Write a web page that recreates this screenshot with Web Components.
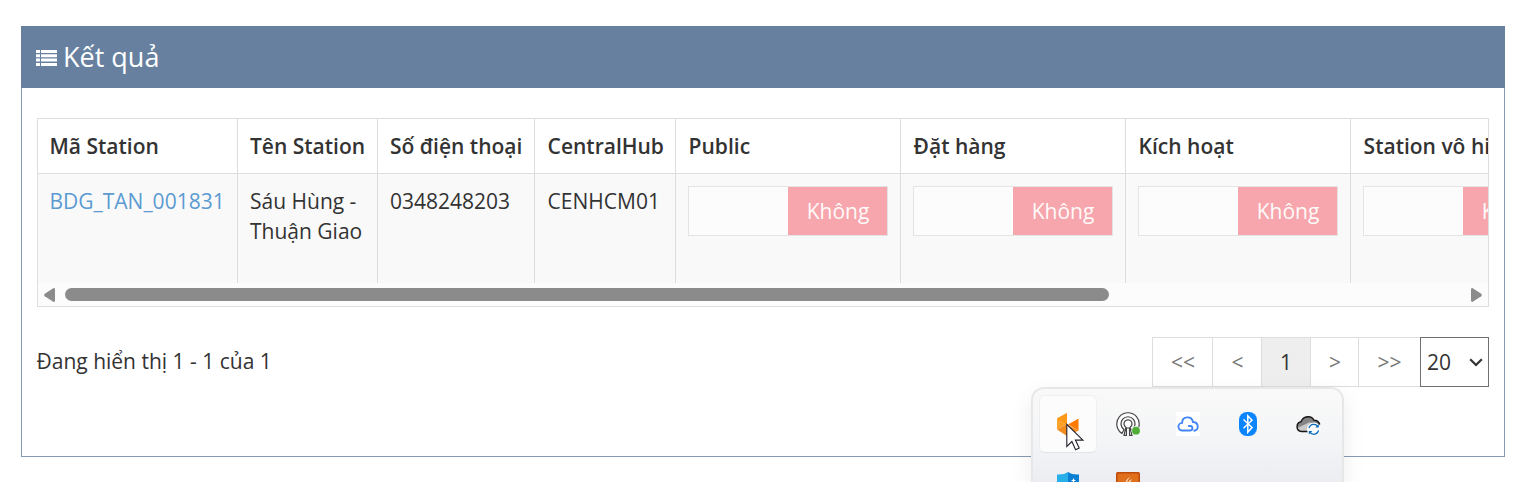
<!DOCTYPE html>
<html lang="vi">
<head>
<meta charset="utf-8">
<title>Kết quả</title>
<style>
    body {
        margin: 0;
        height: 482px;
        overflow: hidden;
        position: relative;
        background: #fff;
        color: #333;
        font: 21px/30px "Open Sans", sans-serif;
    }
    result-panel { margin: 26px 27px 0 21px; }
    tray-flyout { position: absolute; left: 1031px; top: 387px; }
    mouse-pointer { position: absolute; left: 1066px; top: 423px; }
</style>
</head>
<body>
<result-panel heading="Kết quả">
    <station-table></station-table>
    <table-footer>
        <span>Đang hiển thị 1 - 1 của 1</span>
        <page-nav slot="nav" page="1" size="20"></page-nav>
    </table-footer>
</result-panel>
<tray-flyout></tray-flyout>
<mouse-pointer></mouse-pointer>

<script>
class ResultPanel extends HTMLElement {
    constructor() {
        super();
        this.attachShadow({ mode: 'open' });
    }

    connectedCallback() {
        this.shadowRoot.innerHTML = `
            <style>
                :host {
                    display: block;
                    box-sizing: border-box;
                    height: 431px;
                    border: 1px solid #869ab3;
                    border-top: 0;
                }
                header {
                    display: flex;
                    align-items: center;
                    gap: 6px;
                    height: 62px;
                    margin-left: -1px;
                    margin-right: -1px;
                    padding-left: 15px;
                    box-sizing: border-box;
                    background: #67809f;
                    color: #fff;
                    font-size: 27px;
                }
                svg { display: block; margin-top: 2px; }
                .body { padding: 30px 15px 0; }
            </style>
            <header>
                <svg width="21" height="16" viewBox="0 0 21 16" fill="#fff">
                    <path d="M0 0h4v3H0zM5 0h16v3H5zM0 4.3h4v3H0zM5 4.3h16v3H5zM0 8.6h4v3H0zM5 8.6h16v3H5zM0 13h4v3H0zM5 13h16v3H5z"/>
                </svg>
                <span>${this.getAttribute('heading')}</span>
            </header>
            <div class="body"><slot></slot></div>
        `;
    }
}

class YesNoSwitch extends HTMLElement {
    constructor() {
        super();
        this.attachShadow({ mode: 'open' });
    }

    connectedCallback() {
        this.shadowRoot.innerHTML = `
            <style>
                :host {
                    display: flex;
                    box-sizing: border-box;
                    width: 200px;
                    height: 50px;
                    border: 1px solid #e4e4e4;
                    background: #fcfcfc;
                }
                i { flex: 1; }
                span {
                    width: 99px;
                    box-sizing: border-box;
                    padding-left: 1px;
                    background: #f6a6ac;
                    color: #fffafa;
                    line-height: 48px;
                    text-align: center;
                }
            </style>
            <i></i><span>Không</span>
        `;
    }
}

class StationTable extends HTMLElement {
    constructor() {
        super();
        this.attachShadow({ mode: 'open' });
        this.columns = ['Mã Station', 'Tên Station', 'Số điện thoại', 'CentralHub', 'Public', 'Đặt hàng', 'Kích hoạt', 'Station vô hi'];
        this.row = [
            '<a>BDG_TAN_001831</a>', 'Sáu Hùng - Thuận Giao', '0348248203', 'CENHCM01',
            '<yes-no-switch></yes-no-switch>', '<yes-no-switch></yes-no-switch>',
            '<yes-no-switch></yes-no-switch>', '<yes-no-switch></yes-no-switch>'
        ];
    }

    connectedCallback() {
        this.shadowRoot.innerHTML = `
            <style>
                :host { display: block; border: 1px solid #ddd; overflow: hidden; }
                .grid {
                    display: grid;
                    grid-template-columns: 200px 140px 157px 141px 225px 225px 225px 225px;
                    grid-template-rows: 55px 109px;
                }
                .grid > div {
                    box-sizing: border-box;
                    padding: 12px 0 0 12px;
                    border-right: 1px solid #ddd;
                    background: #f9f9f9;
                }
                .grid > .head {
                    border-bottom: 1px solid #ddd;
                    background: #fff;
                    font-weight: 600;
                    white-space: nowrap;
                }
                .grid > .head:nth-child(n+4) { padding-left: 12.6px; }
                .grid > div:nth-child(12) { padding-left: 12.6px; }
                .grid > div:nth-child(8n+1) { padding-left: 11.5px; }
                a { color: #5b9bd1; }
                .scroll {
                    display: flex;
                    align-items: center;
                    height: 23px;
                    padding: 0 6px;
                    background: #fcfcfc;
                }
                .thumb {
                    width: 1044px;
                    height: 13px;
                    margin: 0 auto 0 10px;
                    border-radius: 7px;
                    background: #8b8b8b;
                }
            </style>
            <div class="grid">
                ${this.columns.map(c => `<div class="head">${c}</div>`).join('')}
                ${this.row.map(c => `<div>${c}</div>`).join('')}
            </div>
            <div class="scroll">
                <svg width="11" height="14" viewBox="0 0 11 14"><path d="M9.6.1Q11 0 11 1.5v11Q11 14 9.6 13.9L.8 8.3Q-.5 7 .8 5.7z" fill="#8b8b8b"/></svg>
                <div class="thumb"></div>
                <svg width="11" height="14" viewBox="0 0 11 14"><path d="M1.4.1Q0 0 0 1.5v11Q0 14 1.4 13.9l8.8-5.6Q11.5 7 10.2 5.7z" fill="#8b8b8b"/></svg>
            </div>
        `;
    }
}

class TableFooter extends HTMLElement {
    constructor() {
        super();
        this.attachShadow({ mode: 'open' });
    }

    connectedCallback() {
        this.shadowRoot.innerHTML = `
            <style>
                :host {
                    display: flex;
                    justify-content: space-between;
                    height: 50px;
                    margin-top: 30px;
                    margin-left: -.5px;
                    line-height: 48px;
                }
            </style>
            <slot></slot>
            <slot name="nav"></slot>
        `;
    }
}

class PageNav extends HTMLElement {
    constructor() {
        super();
        this.attachShadow({ mode: 'open' });
    }

    connectedCallback() {
        this.shadowRoot.innerHTML = `
            <style>
                :host { display: flex; height: 50px; box-sizing: border-box; line-height: 49px; }
                span {
                    box-sizing: border-box;
                    border: 1px solid #ddd;
                    border-right: 0;
                    padding-left: 1px;
                    color: #777;
                    text-align: center;
                }
                .current { padding: 0; background: #eee; color: #333; }
                .size {
                    display: flex;
                    align-items: center;
                    justify-content: space-between;
                    box-sizing: border-box;
                    width: 69px;
                    padding: 0 5px 0 6px;
                    border: 1px solid #6f6f6f;
                    background: #fff;
                }
            </style>
            <span style="width:60px">&lt;&lt;</span>
            <span style="width:49px">&lt;</span>
            <span class="current" style="width:49px">${this.getAttribute('page')}</span>
            <span style="width:48px">&gt;</span>
            <span style="width:62px; padding:0">&gt;&gt;</span>
            <div class="size">${this.getAttribute('size')}
                <svg width="14" height="9" viewBox="0 0 14 9"><path d="M1.2 1.2L7 7l5.8-5.8" fill="none" stroke="#333" stroke-width="2.2"/></svg>
            </div>
        `;
    }
}

class TrayFlyout extends HTMLElement {
    constructor() {
        super();
        this.attachShadow({ mode: 'open' });
    }

    connectedCallback() {
        this.shadowRoot.innerHTML = `
            <style>
                :host {
                    display: grid;
                    grid-template-columns: repeat(5, 58px);
                    grid-template-rows: 58px 58px;
                    gap: 2px;
                    box-sizing: border-box;
                    width: 313px;
                    height: 95px;
                    padding: 6px 6px 0;
                    overflow: hidden;
                    border: 2px solid #e7e7e8;
                    border-bottom: 0;
                    border-radius: 13px 13px 0 0;
                    background: linear-gradient(#f9f9f9, #f4f5f7 50px, #ebedf1);
                    background-clip: padding-box;
                    box-shadow: 0 8px 22px rgba(0, 0, 0, .08);
                }
                div {
                    display: flex;
                    align-items: center;
                    justify-content: center;
                    box-sizing: border-box;
                }
                .hover {
                    border: 1px solid #efefef;
                    border-bottom-color: #e2e3e5;
                    border-radius: 6px;
                    background: #fcfcfc;
                }
                svg { display: block; }
            </style>
            <div class="hover">
                <svg width="24" height="24" viewBox="0 0 24 24">
                    <path d="M1 6.5L11 1v11L1 17.5z" fill="#fda22b"/>
                    <path d="M1 6.5L11 12V1z" fill="#ff9817"/>
                    <path d="M1 17.5L11 12v12z" fill="#f38b1d"/>
                    <path d="M12 12.5L22.5 6.5v12z" fill="#ff7a00"/>
                    <path d="M11 12.5l11.5 6L11 24z" fill="#f8891c"/>
                </svg>
            </div>
            <div>
                <svg width="24" height="24" viewBox="0 0 24 24" fill="#fff" stroke="#454545" stroke-width="1.2">
                    <path d="M6 21.4A11.2 11.2 0 1 1 18 21.4L16 17.5a7 7 0 1 0-8 0z"/>
                    <path d="M8 23.3l1.9-8.1a4 4 0 1 1 4.2 0l1.9 8.1h-2.4V16h-3.2v7.3z"/>
                    <circle cx="20" cy="18.7" r="4.6" stroke="none" fill="#f6f7f8"/>
                    <circle cx="20" cy="18.7" r="3.9" fill="#4eae35" stroke="none"/>
                </svg>
            </div>
            <div>
                <svg width="24" height="24" viewBox="0 0 24 24">
                    <rect width="24" height="24" rx="2" fill="#fff"/>
                    <path d="M12.8 14h1.2a2.2 2.2 0 0 1 .3 4.5H6.3a3.8 3.8 0 0 1-.2-7.6C6.2 3.9 15.8 3.6 17 10c6 .2 6.2 8.2 1.3 8.7" fill="none" stroke="#4285f4" stroke-width="1.9" stroke-linecap="round"/>
                </svg>
            </div>
            <div>
                <svg width="18" height="24" viewBox="0 0 18 24">
                    <rect width="18" height="24" rx="8" fill="#0a84ff"/>
                    <path d="M4.5 7.5l8.5 8-4.2 4.7V3.8L13 8.3l-8.5 8" fill="none" stroke="#fff" stroke-width="1.5"/>
                </svg>
            </div>
            <div>
                <svg width="25" height="24" viewBox="0 0 25 24">
                    <path d="M5.5 19.5C-.2 19.2-.5 11 5 9.7 7.5 3.7 15.4 3 18 8.2c3 0 5 1.7 5.5 4.3L20 19.5z" fill="#858585"/>
                    <path d="M1.3 16l12.2-5.8 9 3.3-4 6h-13z" fill="#c9c9c9"/>
                    <path d="M12 19.5H5.5C-.2 19.2-.5 11 5 9.7 7.5 3.7 15.4 3 18 8.2c3 0 5 1.7 5.8 4.3" fill="none" stroke="#161616" stroke-width="1.4"/>
                    <circle cx="17.8" cy="17.3" r="6.8" fill="#fff"/>
                    <path d="M13 16.2a4.9 4.9 0 0 1 8.8-1.8M22.6 18.4a4.9 4.9 0 0 1-8.8 1.8" fill="none" stroke="#0f6cbd" stroke-width="1.3"/>
                    <path d="M22.8 12v3.6h-3.6zM12.8 22.6V19h3.6z" fill="#0f6cbd"/>
                </svg>
            </div>
            <div>
                <svg width="22" height="24" viewBox="0 0 22 24">
                    <path d="M0 2.5Q7 3 11 0v24Q0 19 0 11z" fill="#28afea"/>
                    <path d="M22 2.5Q15 3 11 0v24q11-5 11-13z" fill="#0b7fd4"/>
                    <path d="M16.5 6l.7 1.8 1.8.7-1.8.7-.7 1.8-.7-1.8-1.8-.7 1.8-.7z" fill="#fff"/>
                </svg>
            </div>
            <div>
                <svg width="24" height="24" viewBox="0 0 24 24">
                    <rect width="24" height="24" rx="1.5" fill="#bf4b0b"/>
                    <rect x="1.5" y="1.5" width="21" height="21" rx="1" fill="#e06f1c"/>
                    <path d="M14.5 4.5Q10 7 8.5 13l2-1Q11 8 14.5 4.5zM16 7q-4 2-5 6l2-1z" fill="#fbe3cb"/>
                </svg>
            </div>
        `;
    }
}

class MousePointer extends HTMLElement {
    constructor() {
        super();
        this.attachShadow({ mode: 'open' });
    }

    connectedCallback() {
        this.shadowRoot.innerHTML = `
            <style>
                :host { display: block; }
                svg { display: block; }
            </style>
            <svg width="19" height="28" viewBox="0 0 19 28">
                <path d="M.8 1.4v22l5.1-4.9 3.7 8.2 3.6-1.6-3.8-8h7.5z" fill="#fff" stroke="#20202c" stroke-width="1.1"/>
            </svg>
        `;
    }
}

customElements.define('yes-no-switch', YesNoSwitch);
customElements.define('station-table', StationTable);
customElements.define('page-nav', PageNav);
customElements.define('table-footer', TableFooter);
customElements.define('result-panel', ResultPanel);
customElements.define('tray-flyout', TrayFlyout);
customElements.define('mouse-pointer', MousePointer);
</script>
</body>
</html>
